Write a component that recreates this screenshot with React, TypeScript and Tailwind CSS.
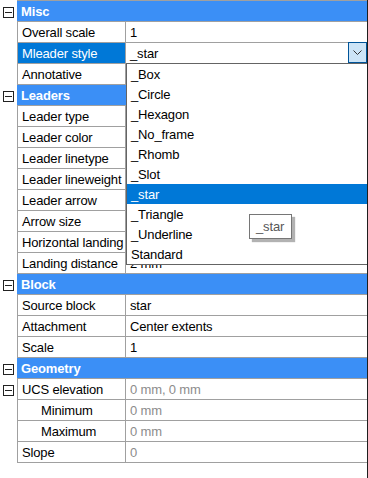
import React from "react";

type Row =
  | { kind: "header"; label: string }
  | { kind: "row"; label: string; value?: string; gray?: boolean; indent?: boolean; minus?: boolean; selected?: boolean; combo?: boolean };

const rows: Row[] = [
  { kind: "header", label: "Misc" },
  { kind: "row", label: "Overall scale", value: "1" },
  { kind: "row", label: "Mleader style", value: "_star", selected: true, combo: true },
  { kind: "row", label: "Annotative" },
  { kind: "header", label: "Leaders" },
  { kind: "row", label: "Leader type" },
  { kind: "row", label: "Leader color" },
  { kind: "row", label: "Leader linetype" },
  { kind: "row", label: "Leader lineweight" },
  { kind: "row", label: "Leader arrow" },
  { kind: "row", label: "Arrow size" },
  { kind: "row", label: "Horizontal landing" },
  { kind: "row", label: "Landing distance", value: "2 mm" },
  { kind: "header", label: "Block" },
  { kind: "row", label: "Source block", value: "star" },
  { kind: "row", label: "Attachment", value: "Center extents" },
  { kind: "row", label: "Scale", value: "1" },
  { kind: "header", label: "Geometry" },
  { kind: "row", label: "UCS elevation", value: "0 mm, 0 mm", gray: true, minus: true },
  { kind: "row", label: "Minimum", value: "0 mm", gray: true, indent: true },
  { kind: "row", label: "Maximum", value: "0 mm", gray: true, indent: true },
  { kind: "row", label: "Slope", value: "0", gray: true },
];

const items = ["_Box", "_Circle", "_Hexagon", "_No_frame", "_Rhomb", "_Slot", "_star", "_Triangle", "_Underline", "Standard"];

function Minus() {
  return (
    <div className="w-[11px] h-[11px] border border-[#222] bg-white flex items-center justify-center">
      <div className="w-[7px] h-px bg-[#222]" />
    </div>
  );
}

export default function App() {
  return (
    <div
      className="relative w-[368px] h-[478px] bg-white border-r border-[#1e1e1e] text-[13px] tracking-[-0.15px] text-black overflow-hidden"
      style={{ fontFamily: "Tahoma, 'Liberation Sans', Arial, sans-serif" }}
    >
      <div className="border-t border-[#a0a0a0] ml-[17px]" />
      {rows.map((r, i) =>
        r.kind === "header" ? (
          <div key={i} className="flex h-[21px]">
            <div className="w-[17px] shrink-0 flex items-center justify-center pt-[2px]">
              <Minus />
            </div>
            <div className="flex-1 bg-[#3b8ff6] border-b border-[#a0a0a0] text-white font-bold pl-[4px] flex items-center leading-none">
              {r.label}
            </div>
          </div>
        ) : (
          <div key={i} className="flex h-[21px]">
            <div className="w-[17px] shrink-0 flex items-center justify-center pt-[2px]">
              {r.minus ? <Minus /> : null}
            </div>
            <div
              className={
                "w-[108px] shrink-0 border-l border-b border-[#a0a0a0] flex items-center leading-none whitespace-nowrap overflow-hidden " +
                (r.indent ? "pl-[23px] " : "pl-[4px] ") +
                (r.selected ? "bg-[#0078d7] text-white" : "")
              }
            >
              {r.label}
            </div>
            <div
              className={
                "flex-1 min-w-0 border-l border-b border-[#a0a0a0] flex items-center leading-none whitespace-nowrap pl-[4px] " +
                (r.gray ? "text-[#8c8c8c]" : "text-black")
              }
            >
              <span className="flex-1">{r.value}</span>
              {r.combo ? (
                <div className="w-[19px] h-[21px] -mt-px bg-[#cce4f7] border border-[#005499] flex items-center justify-center">
                  <svg width="9" height="6" viewBox="0 0 9 6">
                    <path d="M0.5 0.5 L4.5 4.5 L8.5 0.5" fill="none" stroke="#333" strokeWidth="1" />
                  </svg>
                </div>
              ) : null}
            </div>
          </div>
        )
      )}

      {/* dropdown list */}
      <div className="absolute left-[126px] top-[63px] w-[242px] h-[202px] bg-white border border-[#646464]">
        {items.map((it) => (
          <div
            key={it}
            className={
              "h-[20px] flex items-center pl-[4px] leading-none " +
              (it === "_star" ? "bg-[#0078d7] text-white" : "text-black")
            }
          >
            {it}
          </div>
        ))}
      </div>

      {/* tooltip */}
      <div className="absolute left-[249px] top-[214px] w-[43px] h-[25px] bg-white border border-[#767676] shadow-[3px_3px_1px_rgba(0,0,0,0.3)] flex items-center pl-[6px] text-[#575757] leading-none">
        _star
      </div>
    </div>
  );
}
